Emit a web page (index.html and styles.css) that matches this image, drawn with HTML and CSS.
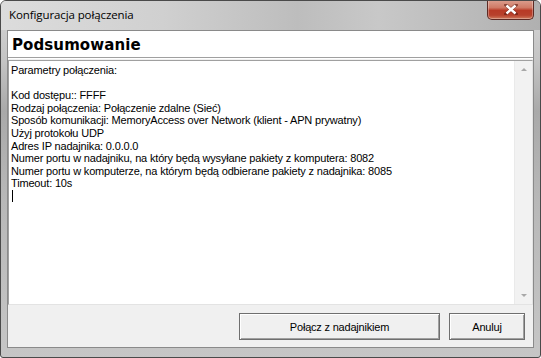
FILE: index.html
```html
<!DOCTYPE html>
<html>
<head>
<meta charset="utf-8">
<link rel="stylesheet" href="styles.css">
</head>
<body>
<div class="window">
  <div class="titlebar">
    <span class="title">Konfiguracja połączenia</span>
    <div class="close"><svg width="14" height="11" viewBox="0 0 14 11"><path d="M2 1 L12 10 M12 1 L2 10" stroke="#5a1a10" stroke-width="3.6" stroke-linecap="square" opacity="0.6"/><path d="M2.5 1.5 L11.5 9.5 M11.5 1.5 L2.5 9.5" stroke="#fff" stroke-width="2.4"/></svg></div>
  </div>
  <div class="client">
    <div class="header">Podsumowanie</div>
    <div class="memo">
      <div class="memo-text">
        <div>Parametry połączenia:</div>
        <div>&nbsp;</div>
        <div>Kod dostępu:: FFFF</div>
        <div>Rodzaj połączenia: Połączenie zdalne (Sieć)</div>
        <div>Sposób komunikacji: MemoryAccess over Network (klient - APN prywatny)</div>
        <div>Użyj protokołu UDP</div>
        <div>Adres IP nadajnika: 0.0.0.0</div>
        <div>Numer portu w nadajniku, na który będą wysyłane pakiety z komputera: 8082</div>
        <div>Numer portu w komputerze, na którym będą odbierane pakiety z nadajnika: 8085</div>
        <div>Timeout: 10s</div>
        <div class="caret"></div>
      </div>
      <div class="scrollbar">
        <div class="arrow up"></div>
        <div class="track"></div>
        <div class="arrow down"></div>
      </div>
    </div>
    <div class="footer">
      <button class="btn btn-connect">Połącz z nadajnikiem</button>
      <button class="btn btn-cancel">Anuluj</button>
    </div>
  </div>
</div>
</body>
</html>
```

FILE: styles.css
```css
html, body {
  margin: 0;
  padding: 0;
  background: #ffffff;
}
.window {
  width: 541px;
  height: 358px;
  box-sizing: border-box;
  border: 1px solid #4a4a4a;
  border-radius: 6px 6px 3px 3px;
  background: linear-gradient(to bottom, #d6d6d6 0px, #c4c4c4 60px, #a9a9a9 110px, #b8b8b8 200px, #c6c6c6 358px);
  display: flex;
  flex-direction: column;
  overflow: hidden;
}
.titlebar {
  height: 29px;
  flex: none;
  position: relative;
  background: linear-gradient(to right, #dcdcdc 0%, #d0d0d0 30%, #bdbdbd 55%, #c8c8c8 70%, #b0b0b0 100%);
}
.title {
  position: absolute;
  left: 8px;
  top: 6px;
  font-family: "Open Sans", "Noto Sans", sans-serif;
  font-size: 11.5px;
  color: #000;
  letter-spacing: -0.1px;
}
.close {
  position: absolute;
  left: 486px;
  top: -1px;
  width: 47px;
  height: 20px;
  box-sizing: border-box;
  border: 1px solid #5d2a24;
  border-top: none;
  border-radius: 0 0 5px 5px;
  background: linear-gradient(to bottom, #dca090 0%, #cf7a66 40%, #b83a26 55%, #b8412c 80%, #cf7a5c 100%);
  box-shadow: inset 0 0 0 1px rgba(255,255,255,0.3);
  display: flex;
  align-items: center;
  justify-content: center;
}
.client {
  flex: 1;
  margin: 0 6px 9px 6px;
  background: #f0f0f0;
  border: 1px solid #8a8a8a;
  display: flex;
  flex-direction: column;
}
.header {
  height: 26px;
  flex: none;
  background: #ffffff;
  border-bottom: 1px solid #a0a0a0;
  box-shadow: 0 1px 0 #ffffff;
  font-family: "DejaVu Sans", sans-serif;
  font-weight: bold;
  font-size: 15px;
  line-height: 28px;
  padding-left: 4px;
  letter-spacing: 0.1px;
  color: #000;
}
.memo {
  height: 243px;
  flex: none;
  margin-top: 2px;
  background: #ffffff;
  border-top: 1px solid #a0a0a0;
  border-left: 1px solid #a0a0a0;
  border-bottom: 1px solid #e3e3e3;
  border-right: 1px solid #e3e3e3;
  display: flex;
}
.memo-text {
  flex: 1;
  padding: 3px 0 0 2px;
  font-family: "Liberation Sans", Arial, sans-serif;
  font-size: 11px;
  line-height: 12.6px;
  letter-spacing: -0.17px;
  color: #000;
}
.caret {
  width: 1px;
  height: 12px;
  background: #000;
  margin-left: 1px;
}
.scrollbar {
  width: 17px;
  flex: none;
  background: #f2f2f2;
  border-left: 1px solid #eaeaea;
  display: flex;
  flex-direction: column;
}
.track { flex: 1; }
.arrow {
  height: 17px;
  display: flex;
  align-items: center;
  justify-content: center;
}
.arrow.up::before {
  content: "";
  border-left: 3px solid transparent;
  border-right: 3px solid transparent;
  border-bottom: 3px solid #a8a8a8;
}
.arrow.down::before {
  content: "";
  border-left: 3px solid transparent;
  border-right: 3px solid transparent;
  border-top: 3px solid #a8a8a8;
}
.footer {
  flex: 1;
  display: flex;
  justify-content: flex-end;
  align-items: flex-start;
  gap: 9px;
  padding: 8px 8px 0 0;
}
.btn {
  height: 27px;
  background: #f0f0f0;
  border: 1px solid #6f6f6f;
  box-shadow: inset 1px 1px 0 #ffffff, inset -1px -1px 0 #a0a0a0;
  font-family: "Liberation Sans", Arial, sans-serif;
  font-size: 11px;
  letter-spacing: -0.2px;
  color: #000;
  padding: 0;
}
.btn-connect { width: 201px; }
.btn-cancel { width: 76px; }
```
